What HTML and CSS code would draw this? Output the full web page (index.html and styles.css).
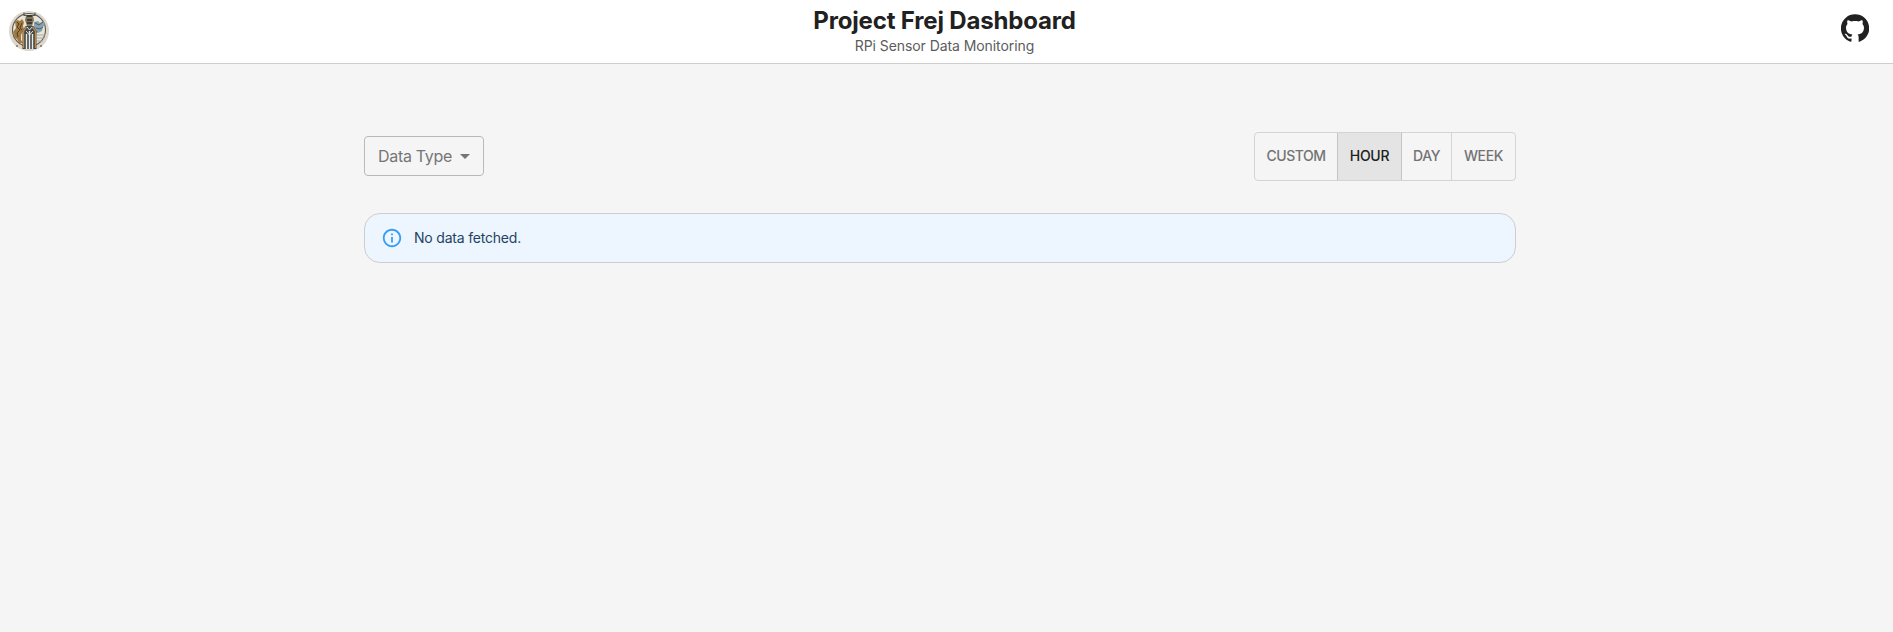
FILE: index.html
```html
<!DOCTYPE html>
<html lang="en">
<head>
<meta charset="utf-8">
<title>Project Frej Dashboard</title>
<link rel="stylesheet" href="styles.css">
</head>
<body>
<header class="header">
  <svg class="logo" viewBox="0 0 40 40" aria-hidden="true">
    <circle cx="20" cy="20" r="20" fill="#ddd6ca"/>
    <circle cx="20" cy="19" r="16.500" fill="#e8e4d9" stroke="#5b5953" stroke-width="1.1"/>
    <path d="M6 11l2-2 3 1 2-2 2 3-1 4 1 3-3 6v5l2 3h-4l-2-4-2-1-2-6 3-4z" fill="#a1783f"/>
    <path d="M8 11l2 2-2 3 3 3-3 3 1 4M13 12l-2 5 2 2" fill="none" stroke="#4d3b29" stroke-width="1"/>
    <path d="M25 11l4-1 2 2 3-2 2 3-2 3-1 4-4 2-3-1-1-4z" fill="#88a2b0"/>
    <path d="M26 12l4 2 4-3M27 17l4 1 3-2M28 20l-2 3" fill="none" stroke="#48606c" stroke-width="1"/>
    <path d="M28 24h8M28 27h7M28 30h6" stroke="#a8a8a0" stroke-width="1"/>
    <path d="M13.500 38V20l3-5h8l3 5v18z" fill="#45484b"/>
    <path d="M14.500 37V20l3-4M26.500 37V20l-3-4" fill="none" stroke="#b88b48" stroke-width="1.4"/>
    <path d="M17.500 38V23M20.500 38V20M23.500 38V23" stroke="#eceae6" stroke-width="1.400"/>
    <path d="M17 20l3.500 4 3.500-4M18 16l2.500 3 2.500-3" fill="none" stroke="#e3e0da" stroke-width="1"/>
    <path d="M17 5h7l1 4-2 6h-5l-2-6z" fill="#7d7357"/>
    <path d="M15 1.500v3h11v-3" fill="none" stroke="#555a5c" stroke-width="1.2"/>
    <path d="M18 5h5M18 9h5M18 12h5" stroke="#292b2c" stroke-width="1.500"/>
    <path d="M7 35h2M31 35h2" stroke="#77736a" stroke-width="1.500"/>
  </svg>
  <div class="heading">
    <h1 class="title">Project Frej Dashboard</h1>
    <p class="subtitle">RPi Sensor Data Monitoring</p>
  </div>
  <a class="github" href="#" aria-label="GitHub">
    <svg viewBox="1 1 22 22" aria-hidden="true"><path fill="#212121" d="M12 1.270a11 11 0 00-3.480 21.460c.55.090.73-.28.73-.55v-1.840c-3.030.64-3.670-1.460-3.670-1.460-.55-1.290-1.280-1.650-1.280-1.650-.92-.65.1-.65.1-.65 1.100 0 1.730 1.100 1.730 1.100.92 1.650 2.570 1.200 3.210.92a2 2 0 01.64-1.470c-2.470-.27-5.040-1.190-5.040-5.500 0-1.100.46-2.100 1.200-2.840a3.760 3.760 0 010-2.930s.91-.28 3.110 1.100c1.800-.49 3.700-.49 5.500 0 2.100-1.380 3.020-1.100 3.020-1.100a3.760 3.760 0 01.1 2.930 4 4 0 011.190 2.840c0 4.310-2.570 5.230-5.040 5.500.45.370.82.920.82 2.020v3.030c0 .27.1.64.73.55A11 11 0 0012 1.270"/></svg>
  </a>
</header>
<main class="content">
  <div class="toolbar">
    <button class="select" type="button"><span>Data Type</span>
      <svg viewBox="0 0 10 5" aria-hidden="true"><path d="M0 0h10L5 5z" fill="currentColor"/></svg>
    </button>
    <div class="ranges">
      <button class="range custom" type="button">CUSTOM</button>
      <button class="range hour selected" type="button">HOUR</button>
      <button class="range day" type="button">DAY</button>
      <button class="range week" type="button">WEEK</button>
    </div>
  </div>
  <div class="alert" role="status">
    <svg viewBox="0 0 24 24" aria-hidden="true"><path fill="#389ef5" d="M11 7h2v2h-2zm0 4h2v6h-2zm1-9C6.480 2 2 6.480 2 12s4.480 10 10 10 10-4.480 10-10S17.520 2 12 2zm0 18c-4.410 0-8-3.590-8-8s3.590-8 8-8 8 3.590 8 8-3.590 8-8 8z"/></svg>
    <span class="message">No data fetched.</span>
  </div>
</main>
</body>
</html>
```
FILE: styles.css
```css
* { box-sizing: border-box; }
body {
  margin: 0;
  min-height: 100vh;
  background: #f5f5f5;
  color: #212121;
  font-family: Inter, "Liberation Sans", sans-serif;
}
.header {
  display: grid;
  grid-template-columns: 60px 1fr 64px;
  height: 64px;
  background: #fff;
  border-bottom: 1px solid #cecece;
}
.logo { width: 40px; height: 40px; margin: 11px 0 0 9px; }
.heading { text-align: center; padding-top: 6px; }
.title { margin: 0; font-size: 24px; line-height: 29px; font-weight: 700; letter-spacing: -0.17px; }
.subtitle { margin: 0; font-size: 14px; line-height: 22px; color: #5c5c5c; letter-spacing: -0.07px; }
.github { margin: 14px 0 0 12px; width: 28px; height: 28px; }
.github svg { display: block; width: 28px; height: 28px; }
.content { width: 1152px; margin: 68px 0 0 364px; }
.toolbar { display: flex; justify-content: space-between; align-items: flex-start; height: 49px; }
button { font-family: inherit; background: none; cursor: pointer; }
.select {
  display: flex;
  align-items: center;
  gap: 8px;
  width: 120px;
  height: 40px;
  margin-top: 4px;
  padding: 0 13px;
  border: 1px solid #b9b9b9;
  border-radius: 4px;
  color: #757575;
  font-size: 16px;
  letter-spacing: -0.3px;
  white-space: nowrap;
}
.select svg { width: 10px; height: 5px; flex: none; }
.ranges {
  display: flex;
  width: 262px;
  height: 49px;
  border: 1px solid #d4d4d4;
  border-radius: 4px;
  overflow: hidden;
}
.range {
  border: 0;
  border-right: 1px solid #d4d4d4;
  padding: 0 0 2px;
  color: #737373;
  font-size: 14px;
  font-weight: 500;
  letter-spacing: -0.35px;
}
.custom { width: 83px; border-right-color: #c4c4c4; letter-spacing: -0.5px; }
.hour { width: 64px; }
.day { width: 50px; }
.week { width: 63px; border-right: 0; }
.selected { background: #e4e4e4; color: #212121; border-right-color: #c4c4c4; letter-spacing: -0.25px; }
.alert {
  display: flex;
  align-items: center;
  gap: 11px;
  height: 50px;
  margin-top: 32px;
  padding: 0 16px;
  background: #edf5ff;
  border: 1px solid #cecece;
  border-radius: 16px;
  color: #1f4461;
}
.alert svg { width: 22px; height: 22px; }
.message { padding-bottom: 2px; font-size: 14px; letter-spacing: -0.2px; }
```
